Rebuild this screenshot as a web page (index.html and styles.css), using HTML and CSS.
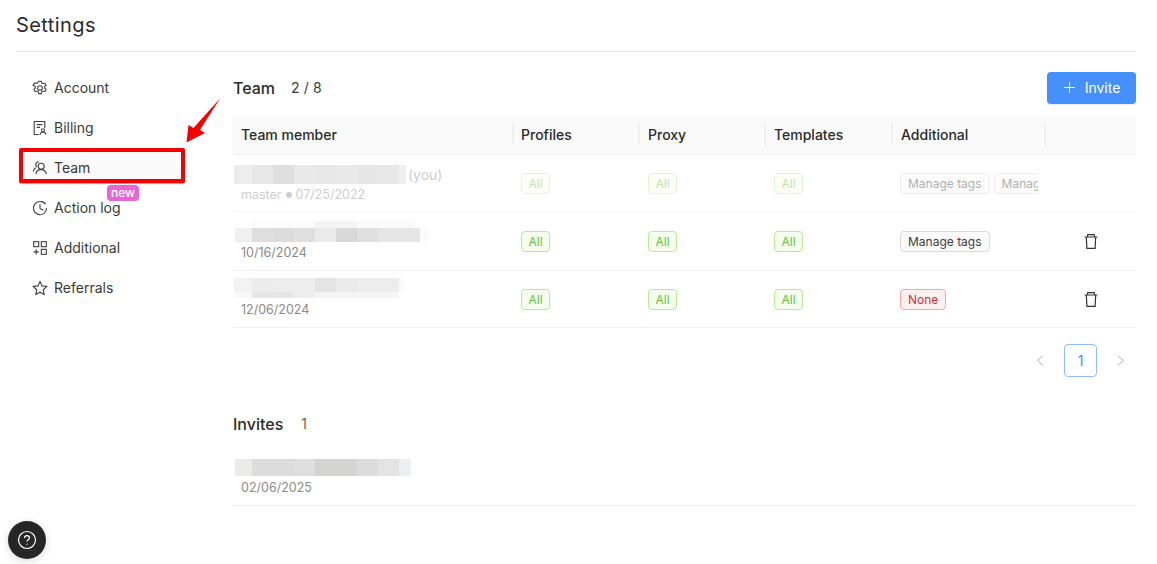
FILE: index.html
```html
<!DOCTYPE html>
<html lang="en">
<head>
<meta charset="utf-8">
<title>Settings</title>
<link rel="stylesheet" href="styles.css">
</head>
<body>
<div class="page">
  <h1 class="title">Settings</h1>
  <div class="layout">
    <nav class="side">
      <a class="nav-item">
        <svg class="nav-icon" viewBox="0 0 16 16"><path d="M6.700 1.200h2.600l.4 1.800 1.300.7 1.800-.6 1.300 2.300-1.400 1.200v1.600l1.400 1.200-1.300 2.300-1.800-.6-1.300.7-.4 1.800H6.700l-.4-1.800-1.300-.7-1.800.6-1.300-2.300 1.400-1.200V6.400L1.100 5.200l1.300-2.300 1.800.6 1.300-.7z"/><circle cx="8" cy="8" r="2.300"/></svg>
        Account
      </a>
      <a class="nav-item">
        <svg class="nav-icon" viewBox="0 0 16 16"><path d="M7 14.500H2.200V1.500h10.600v6.500"/><path d="M4.700 4.600h5.600M4.700 7.400h3.400"/><circle cx="11" cy="10.300" r="1.600"/><path d="M8 14.600c.3-1.600 1.500-2.400 3-2.400s2.700.8 3 2.400"/></svg>
        Billing
      </a>
      <a class="nav-item nav-active">
        <svg class="nav-icon" viewBox="0 0 16 16"><circle cx="9.200" cy="6.200" r="3"/><path d="M3.800 14.200c.4-2.800 2.700-4.600 5.400-4.600s4.600 1.800 5.200 4.600"/><path d="M6.600 1.800a3 3 0 0 0-2.800 3c0 .9.300 1.600.9 2.200M3.600 7.800C2.400 8.700 1.600 10 1.300 11.500"/></svg>
        Team
      </a>
      <a class="nav-item nav-badged">
        <svg class="nav-icon" viewBox="0 0 16 16"><path d="M13.200 4A6.600 6.600 0 1 0 14.600 8"/><path d="M8 4.200V8.500l3.400 1.700"/><path d="M8.500 1.500c2.300 0 4 1 4.900 2.600"/></svg>
        Action log
        <span class="badge">new</span>
      </a>
      <a class="nav-item">
        <svg class="nav-icon" viewBox="0 0 16 16"><rect x="1.700" y="1.700" width="5" height="5"/><rect x="9.300" y="1.700" width="5" height="5"/><rect x="9.300" y="9.300" width="5" height="5"/><path d="M4.200 9.200v5.400M1.500 11.900h5.400"/></svg>
        Additional
      </a>
      <a class="nav-item">
        <svg class="nav-icon" viewBox="0 0 16 16"><path d="M8 1.500l2 4.400 4.800.6-3.500 3.300.9 4.700L8 12.200l-4.200 2.300.9-4.700L1.200 6.500 6 5.900z"/></svg>
        Referrals
      </a>
    </nav>
    <main class="main">
      <div class="section-head">
        <h2 class="section-title">Team</h2>
        <span class="count">2 / 8</span>
        <button class="invite">
          <svg class="plus" viewBox="0 0 14 14"><path d="M7 1v12M1 7h12"/></svg>
          Invite
        </button>
      </div>
      <div class="table">
        <div class="row head">
          <div class="th">Team member</div>
          <div class="th sep">Profiles</div>
          <div class="th sep">Proxy</div>
          <div class="th sep">Templates</div>
          <div class="th sep">Additional</div>
          <div class="th sep"></div>
        </div>
        <div class="row row-one">
          <div class="member muted">
            <div class="name-line"><span class="mosaic m1"></span><span class="you">(you)</span></div>
            <div class="date date-you">master<i class="dot"></i>07/25/2022</div>
          </div>
          <div class="cell muted"><span class="tag ok">All</span></div>
          <div class="cell cell-shift muted"><span class="tag ok">All</span></div>
          <div class="cell cell-shift muted"><span class="tag ok">All</span></div>
          <div class="cell muted clip"><span class="tag plain">Manage tags</span><span class="tag plain">Manage tags</span></div>
          <div class="cell"></div>
        </div>
        <div class="row row-two">
          <div class="member">
            <span class="mosaic m2"></span>
            <div class="date">10/16/2024</div>
          </div>
          <div class="cell"><span class="tag ok">All</span></div>
          <div class="cell cell-shift"><span class="tag ok">All</span></div>
          <div class="cell cell-shift"><span class="tag ok">All</span></div>
          <div class="cell"><span class="tag plain">Manage tags</span></div>
          <div class="cell del"><svg class="trash" viewBox="0 0 14 15"><path d="M.6 3h12.800M2.300 3l.6 11.400h8.200l.6-11.400M3.300 3l.5-2.400h6.400l.5 2.400"/></svg></div>
        </div>
        <div class="row row-three">
          <div class="member">
            <span class="mosaic m3"></span>
            <div class="date">12/06/2024</div>
          </div>
          <div class="cell"><span class="tag ok">All</span></div>
          <div class="cell cell-shift"><span class="tag ok">All</span></div>
          <div class="cell cell-shift"><span class="tag ok">All</span></div>
          <div class="cell"><span class="tag bad">None</span></div>
          <div class="cell del"><svg class="trash" viewBox="0 0 14 15"><path d="M.6 3h12.800M2.300 3l.6 11.400h8.200l.6-11.400M3.300 3l.5-2.400h6.400l.5 2.400"/></svg></div>
        </div>
      </div>
      <div class="pager">
        <svg class="chev" viewBox="0 0 8 12"><path d="M7 1L1.500 6 7 11"/></svg>
        <span class="page-num">1</span>
        <svg class="chev" viewBox="0 0 8 12"><path d="M1 1l5.500 5L1 11"/></svg>
      </div>
      <div class="invites-head">
        <h2 class="section-title">Invites</h2>
        <span class="count count-inv">1</span>
      </div>
      <div class="invite-row">
        <span class="mosaic m4"></span>
        <div class="date">02/06/2025</div>
      </div>
    </main>
  </div>
</div>
<svg class="arrow" viewBox="0 0 40 50"><path d="M35 2.500L15 34 20 37 1.500 46.500 3.500 29 8.500 32z"/></svg>
<button class="help" aria-label="Help">
  <svg viewBox="0 0 20 20"><circle cx="10" cy="10" r="8.500"/><path d="M7.500 8c0-1.500 1.100-2.400 2.500-2.400s2.500.9 2.500 2.200c0 1.900-2.500 2-2.500 3.800"/><path class="help-dot" d="M10 13.700v1.100"/></svg>
</button>
</body>
</html>
```
FILE: styles.css
```css
* { box-sizing: border-box; }
html, body { margin: 0; height: 100%; overflow: hidden; background: #fff; }
body { font-family: Inter, "Liberation Sans", sans-serif; color: #262626; font-size: 14px; }
.page { padding: 0 21px 0 16px; }
.title {
  margin: 0; height: 52px; padding-top: 12px;
  font-size: 20px; line-height: 26px; font-weight: 400; letter-spacing: .42px;
  border-bottom: 1px solid #e4e4e4; color: #2b2b2b;
}
.layout { display: flex; }
.side { width: 217px; flex: none; padding: 16px 0 0 3px; display: flex; flex-direction: column; }
.nav-item {
  position: relative; display: flex; align-items: center; gap: 6.500px;
  width: 166px; height: 40px; padding-left: 13px; color: #3a3a3a; line-height: 20px;
}
.nav-icon { width: 16px; height: 16px; margin-left: -.5px; fill: none; stroke: #404040; stroke-width: 1.100; flex: none; }
.nav-active { height: 35px; margin: 0 0 5px; padding: 5px 0 0 9px; background: #fafafa; border: 4px solid #f40000; border-radius: 2px; box-shadow: 0 1px 1px rgba(0,0,0,.35); }
.badge {
  position: absolute; left: 88px; top: -3px; height: 16px; padding: 0 4px;
  background: #e766d4; color: #fff; border-radius: 4px; font-size: 12px; line-height: 15px; font-weight: 500;
}
.main { flex: 1; min-width: 0; }
.section-head { height: 64px; padding-top: 20px; display: flex; align-items: flex-start; }
.section-title { margin: 0; font-size: 16px; line-height: 32px; font-weight: 500; color: #2b2b2b; }
.count { margin-left: 16px; line-height: 32px; font-size: 14px; letter-spacing: .15px; color: #3a3a3a; }
.count-inv { margin-left: 18px; color: #6b6250; }
.invite {
  margin-left: auto; width: 89px; height: 32px; padding-bottom: 2px; border: 0; border-radius: 4px;
  background: #4590fb; color: #fff; font: 14px Inter, sans-serif; display: flex; align-items: center; justify-content: center; gap: 9px;
  box-shadow: 0 1px 1px rgba(0,0,0,.08);
}
.plus { width: 13px; height: 13px; fill: none; stroke: #fff; stroke-width: 1; }
.row { display: grid; grid-template-columns: 280px 126px 126px 127px 153px 91px; border-bottom: 1px solid #f0f0f0; }
.head { height: 39px; background: #fafafa; font-weight: 500; align-items: center; }
.th { height: 22px; line-height: 22px; padding-left: 8px; color: #2b2b2b; }
.sep { border-left: 2px solid #f0f0f0; padding-left: 7px; margin-left: -1px; }
.sep:nth-child(3), .sep:nth-child(4), .sep:nth-child(5) { padding-left: 8px; }
.row-one { height: 57px; border-bottom-color: #f8f8f8; }
.row-two { height: 59px; }
.row-three { height: 57px; }
.cell { display: flex; align-items: center; gap: 4px; padding-left: 8px; }
.cell-shift { padding-left: 9px; }
.cell.clip { overflow: hidden; margin-right: 7px; white-space: nowrap; }
.del { justify-content: center; padding-left: 0; padding-right: 0; }
.muted { opacity: .42; }
.member { position: relative; }
.tag { flex: none; height: 21px; padding: 0 7px; border: 1px solid; border-radius: 4px; font-size: 12px; line-height: 19px; }
.ok { width: 29px; padding: 0; text-align: center; background: #f6ffed; border-color: #b7eb8f; color: #62bf3c; }
.plain { background: #fafafa; border-color: #d9d9d9; color: #3f3f3f; }
.bad { background: #fff1f0; border-color: #ffa39e; color: #cf3040; }
.trash { width: 14px; height: 15px; fill: none; stroke: #333; stroke-width: 1.200; display: block; }
.mosaic { display: block; background-repeat: no-repeat; }
.date { font-size: 12.500px; line-height: 18px; color: #8a8a8a; padding-left: 8px; }
.name-line { display: flex; align-items: center; }
.you { margin-left: 2px; margin-top: -1px; color: #8a8a8a; font-size: 14px; }
.row-one .member { padding: 10px 0 0 1px; }
.row-one .date { margin-top: 2px; padding-left: 7px; }
.dot { display: inline-block; width: 6px; height: 6px; margin: 0 4px; border-radius: 50%; background: #8a8a8a; vertical-align: 1px; }
.row-two .member { padding: 9px 0 0 2px; }
.row-two .date { margin-top: 2px; padding-left: 6px; }
.row-three .member { padding: 7px 0 0 1px; }
.row-three .date { margin-top: 3px; padding-left: 7px; }
.m1 {
  flex: none; width: 172px; height: 19px;
  background-image: linear-gradient(90deg, #d6d6d6 18px, #c9c9c9 18px 39px, #b4b4b4 39px 60px, #cdcdcd 60px 81px, #cacaca 81px 102px, #cdcdcd 102px 123px, #c5c5c5 123px 144px, #cacaca 144px 165px, #dadada 165px);
}
.m2 {
  width: 194px; height: 21px;
  background-image:
    linear-gradient(90deg, #f0f0f0 17px, #dedede 17px 38px, #dcdcdc 38px 59px, #e0e0e0 59px 80px, #eaeaea 80px 101px, #d8d8d8 101px 122px, #e0e0e0 122px 143px, #e6e6e6 143px 185px, #fbfbfb 185px),
    linear-gradient(90deg, #fff 17px, #fbfbfb 17px 80px, #f4f4f4 80px 122px, #fafafa 122px 180px, #fff 180px);
  background-size: 100% 14px, 100% 7px;
  background-position: 0 7px, 0 0;
}
.m3 {
  width: 170px; height: 20px;
  background-image:
    linear-gradient(90deg, #f3f3f3 18px, #ececec 18px 39px, #ededed 39px 81px, #e4e4e4 81px 102px, #ebebeb 102px 123px, #ededed 123px 165px, #fafafa 165px),
    linear-gradient(90deg, #f8f8f8 18px, #e6e6e6 18px 60px, #eeeeee 60px 81px, #f5f5f5 81px 165px, #fff 165px);
  background-size: 100% 14px, 100% 6px;
  background-position: 0 0, 0 14px;
}
.m4 {
  width: 176px; height: 17px; margin-left: 2px;
  background-image: linear-gradient(90deg, #ebebe9 17px, #dcdcdc 17px 59px, #dedede 59px 80px, #d4d4d2 80px 122px, #dcdcdc 122px 143px, #e4e4e4 143px 164px, #eeeff1 164px);
}
.pager { height: 80px; padding: 16px 11px 0 0; display: flex; align-items: flex-start; justify-content: flex-end; }
.chev { width: 8px; height: 11px; margin-top: 11px; fill: none; stroke: #bfbfbf; stroke-width: 1.100; }
.page-num {
  width: 33px; height: 33px; margin: 0 20px; border: 1px solid #8fbcfb; border-radius: 4px;
  color: #4590fb; text-align: center; line-height: 31px; font-size: 14px;
}
.invites-head { display: flex; height: 51px; align-items: flex-start; }
.invite-row { height: 47px; border-bottom: 1px solid #ececec; }
.invite-row .date { margin-top: 3px; }
.arrow { position: absolute; left: 185px; top: 96px; width: 40px; height: 50px; fill: #f40000; }
.help {
  position: absolute; left: 8px; top: 521px; width: 38px; height: 38px; padding: 0; border: 0; border-radius: 50%;
  background: #262626; box-shadow: 0 2px 8px rgba(0,0,0,.15); display: flex; align-items: center; justify-content: center;
}
.help svg { width: 20px; height: 20px; fill: none; stroke: #fff; stroke-width: 1.200; }
```
